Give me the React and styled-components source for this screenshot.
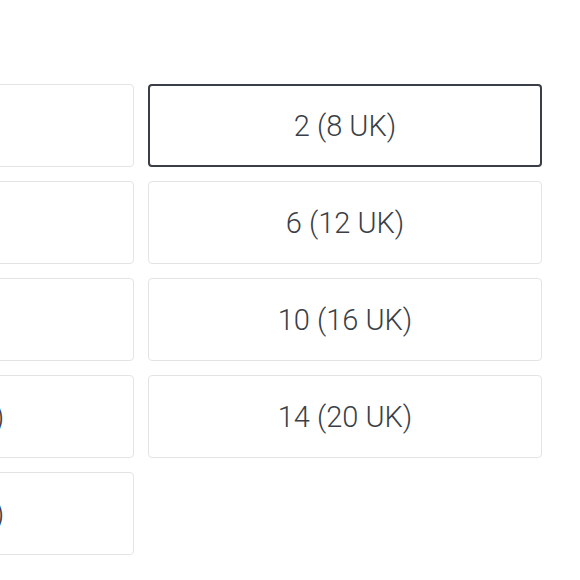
import React from "react";
import styled, { createGlobalStyle } from "styled-components";

const GlobalStyle = createGlobalStyle`
  html, body {
    margin: 0;
    padding: 0;
    background: #ffffff;
    overflow: hidden;
  }
  body {
    font-family: Roboto, "Liberation Sans", sans-serif;
  }
`;

const sizes = [
  "0 (6 UK)",
  "2 (8 UK)",
  "4 (10 UK)",
  "6 (12 UK)",
  "8 (14 UK)",
  "10 (16 UK)",
  "12 (18 UK)",
  "14 (20 UK)",
  "16 (22 UK)",
];

const Grid = styled.div`
  display: grid;
  grid-template-columns: 394px 394px;
  grid-auto-rows: 83px;
  gap: 14px;
  padding-top: 84px;
  margin-left: -260px;
  width: 802px;
`;

const SizeButton = styled.button`
  display: flex;
  align-items: center;
  justify-content: center;
  box-sizing: border-box;
  margin: 0;
  padding: 0;
  background: #ffffff;
  border: ${(p) => (p.$selected ? "2px solid #3a3f47" : "1px solid #e4e4e4")};
  border-radius: 4px;
  font-family: Roboto, "Liberation Sans", sans-serif;
  font-weight: 300;
  font-size: 29px;
  color: #3a3f47;
  cursor: pointer;
`;

const App = () => {
  const [selected, setSelected] = React.useState("2 (8 UK)");

  return (
    <>
      <GlobalStyle />
      <Grid>
        {sizes.map((s) => (
          <SizeButton key={s} $selected={s === selected} onClick={() => setSelected(s)}>
            {s}
          </SizeButton>
        ))}
      </Grid>
    </>
  );
};

export default App;
